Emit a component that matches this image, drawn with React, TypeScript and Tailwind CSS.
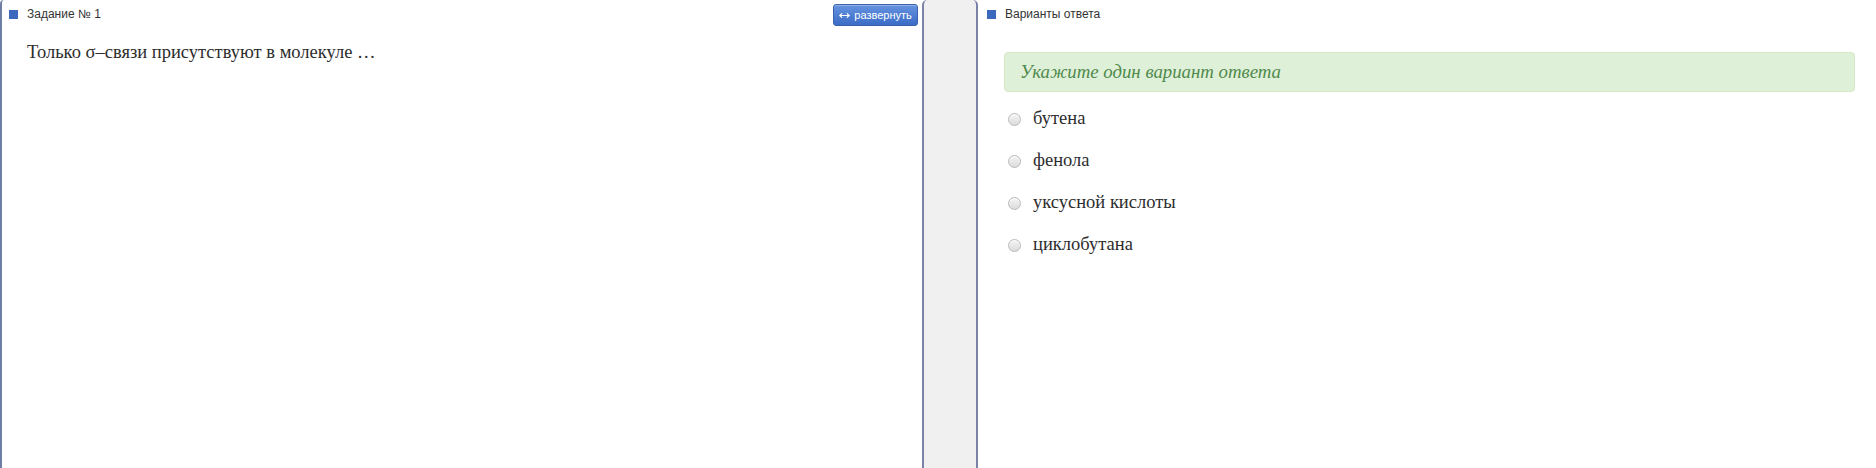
import { MoveHorizontal } from "lucide-react";

// ---- заголовок панели ----

function PanelTitle({ title, offset = "pl-[7px]" }: { title: string; offset?: string }) {
  return (
    <div className={`flex items-center gap-[9px] h-[28px] ${offset}`}>
      <span className="block w-[9px] h-[9px] bg-[#3b69be]" />
      <span className="text-[12px] text-[#333] font-['Liberation_Sans',Arial,sans-serif]">{title}</span>
    </div>
  );
}

// ---- вариант ответа ----

function Option({ label }: { label: string }) {
  return (
    <label className="flex items-center h-[42px] cursor-pointer">
      <span className="block w-[13px] h-[13px] rounded-full border border-[#b9b9b9] bg-gradient-to-b from-[#f4f4f4] to-[#dcdcdc] shadow-[inset_0_1px_1px_rgba(255,255,255,0.8)]" />
      <span className="ml-[12px] text-[18.5px] text-[#2d2d2d] font-['Liberation_Serif','Times_New_Roman',serif]">
        {label}
      </span>
    </label>
  );
}

const options = ["бутена", "фенола", "уксусной кислоты", "циклобутана"];

export default function App() {
  return (
    <div className="flex h-[468px] w-[1876px] bg-white overflow-hidden">
      {/* задание */}
      <div className="w-[922px] shrink-0 border-l-2 border-[#6e7ea6] rounded-tl-[4px]">
        <div className="flex items-start justify-between pr-[4px]">
          <PanelTitle title="Задание № 1" />
          <button
            type="button"
            className="mt-[4px] h-[22px] w-[85px] flex items-center justify-center gap-[4px] rounded-[3px] border border-[#3a62ab] bg-gradient-to-b from-[#6593e0] to-[#3b6cc6] text-white text-[11px] font-medium font-['Liberation_Sans',Arial,sans-serif] shadow-[inset_0_1px_0_rgba(255,255,255,0.3)]"
          >
            <MoveHorizontal size={11} strokeWidth={2.5} />
            развернуть
          </button>
        </div>
        <p className="pl-[25px] mt-[13px] text-[18.5px] leading-[22px] text-[#2d2d2d] font-['Liberation_Serif','Times_New_Roman',serif]">
          Только σ–связи присутствуют в молекуле …
        </p>
      </div>

      {/* разделитель */}
      <div className="w-[56px] shrink-0 border-x-2 border-[#7a82a8] rounded-t-[5px] bg-[#f0f0f1]" />

      {/* варианты */}
      <div className="flex-1 pr-[21px]">
        <PanelTitle title="Варианты ответа" offset="pl-[9px]" />
        <div className="ml-[26px] mt-[24px] h-[40px] flex items-center pl-[15px] rounded-[4px] border border-[#d6e9c6] bg-[#dff0d8]">
          <span className="italic text-[18.8px] text-[#4f8a4c] font-['Liberation_Serif','Times_New_Roman',serif]">
            Укажите один вариант ответа
          </span>
        </div>
        <div className="ml-[30px] mt-[6px] flex flex-col">
          {options.map((o) => (
            <Option key={o} label={o} />
          ))}
        </div>
      </div>
    </div>
  );
}
